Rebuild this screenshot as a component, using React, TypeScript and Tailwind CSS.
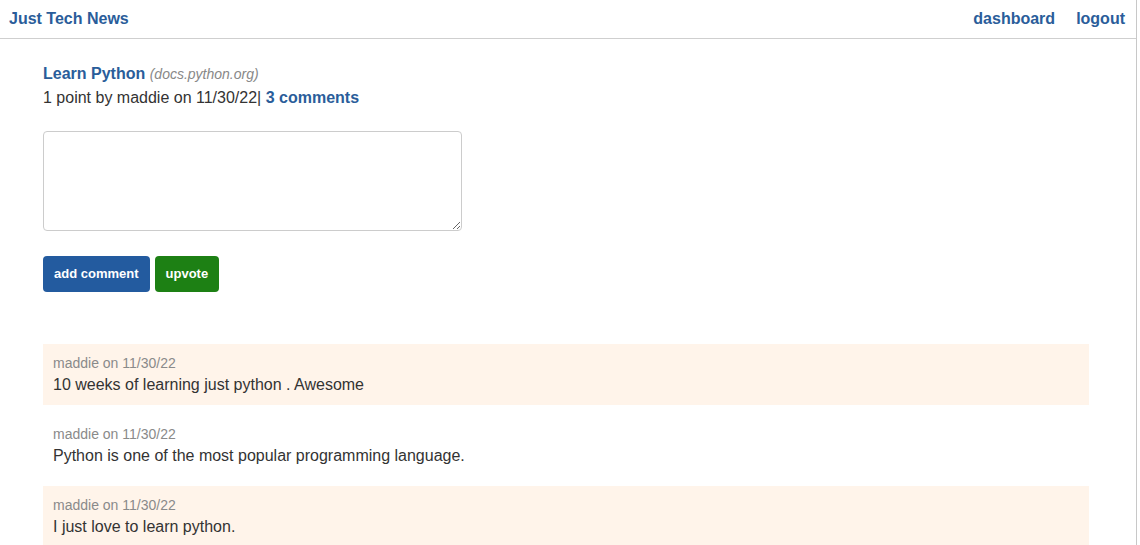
export default function App() {
  const comments = [
    { text: "10 weeks of learning just python . Awesome", shaded: true },
    { text: "Python is one of the most popular programming language.", shaded: false },
    { text: "I just love to learn python.", shaded: true },
  ];
  return (
    <div className="w-[1137px] min-h-[545px] border-r border-[#c8c8c8] bg-white font-['Liberation_Sans',Arial,sans-serif] text-[#333]">
      <header className="h-[39px] flex items-center justify-between pl-[9px] pr-[11px] border-b border-[#cfcfcf]">
        <a className="text-[16px] font-bold text-[#2a5d9a]">Just Tech News</a>
        <nav className="flex gap-[21px] text-[16px] font-bold text-[#2a5d9a]">
          <a>dashboard</a>
          <a>logout</a>
        </nav>
      </header>

      <main className="pl-[43px] pr-[47px] pt-[25px]">
        <div className="text-[16px] leading-[20px]">
          <a className="font-bold text-[#2a5d9a]">Learn Python</a>{" "}
          <span className="italic text-[14px] text-[#888]">(docs.python.org)</span>
        </div>
        <div className="mt-[4px] text-[16px] leading-[20px]">
          1 point by maddie on 11/30/22|{" "}
          <a className="font-bold text-[#2a5d9a]">3 comments</a>
        </div>

        <form className="mt-[23px]">
          <textarea className="block w-[419px] h-[100px] border border-[#cccccc] rounded-[4px] resize-y p-2 outline-none" />
          <div className="flex gap-[5px] mt-[25px]">
            <button type="button" className="h-[36px] px-[11px] rounded-[4px] bg-[#235b9f] text-white text-[13px] font-bold">
              add comment
            </button>
            <button type="button" className="h-[36px] px-[11px] rounded-[4px] bg-[#1d8014] text-white text-[13px] font-bold">
              upvote
            </button>
          </div>
        </form>

        <div className="mt-[52px] flex flex-col gap-[10px]">
          {comments.map((c, i) => (
            <div key={i} className={`h-[61px] px-[10px] pt-[10px] ${c.shaded ? "bg-[#fff4ea]" : ""}`}>
              <p className="text-[14px] leading-[18px] text-[#8a8a8a]">maddie on 11/30/22</p>
              <p className="mt-[2px] text-[16px] leading-[22px] text-[#333]">{c.text}</p>
            </div>
          ))}
        </div>
      </main>
    </div>
  );
}
